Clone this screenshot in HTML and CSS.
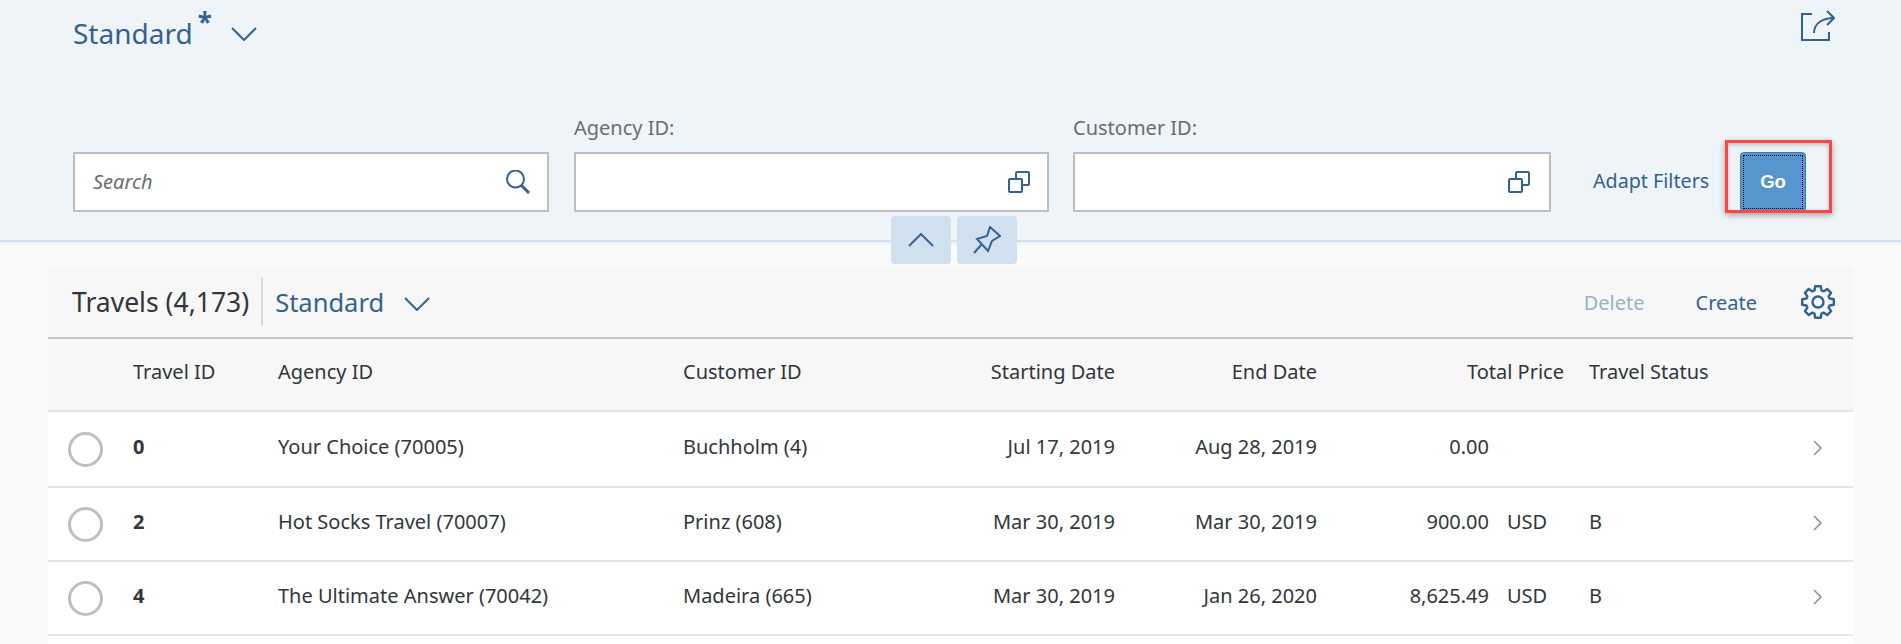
FILE: index.html
```html
<!DOCTYPE html>
<html lang="en">
<head>
    <meta charset="UTF-8">
    <title>Travels</title>
    <link rel="stylesheet" href="styles.css">
</head>
<body>
    <header class="filter-header">
        <div class="variant-row">
            <span class="variant-title">Standard</span>
            <span class="variant-star">*</span>
            <svg class="variant-chevron" width="26" height="14" viewBox="0 0 26 14"><path d="M1 1l12 12L25 1"/></svg>
            <svg class="share-icon" width="34" height="32" viewBox="0 0 34 32"><path d="M11 4H1V30H28V22M13 23C13 13 22 8 33 8M26 1l7 7-7 7"/></svg>
        </div>
        <div class="filter-bar">
            <div class="field field-search">
                <div class="input-box">
                    <span class="placeholder">Search</span>
                    <svg class="icon" width="25" height="24" viewBox="0 0 25 24"><circle cx="9.5" cy="9" r="8.5"/><path d="M15.5 15.5L23 23" class="thick"/></svg>
                </div>
            </div>
            <div class="field field-agency">
                <label>Agency ID:</label>
                <div class="input-box">
                    <svg class="icon" width="22" height="22" viewBox="0 0 22 22"><rect x="1" y="8" width="13" height="13" rx="1"/><path d="M8 8V2a1 1 0 0 1 1-1h11a1 1 0 0 1 1 1v11a1 1 0 0 1-1 1h-6"/></svg>
                </div>
            </div>
            <div class="field field-customer">
                <label>Customer ID:</label>
                <div class="input-box">
                    <svg class="icon" width="22" height="22" viewBox="0 0 22 22"><rect x="1" y="8" width="13" height="13" rx="1"/><path d="M8 8V2a1 1 0 0 1 1-1h11a1 1 0 0 1 1 1v11a1 1 0 0 1-1 1h-6"/></svg>
                </div>
            </div>
            <a class="adapt-link">Adapt Filters</a>
            <button class="go-btn"><span>Go</span></button>
        </div>
        <div class="collapse-btns">
            <div class="small-btn"><svg width="26" height="14" viewBox="0 0 26 14"><path d="M1 13L13 1l12 12"/></svg></div>
            <div class="small-btn"><svg width="28" height="28" viewBox="0 0 28 28"><path d="M17 1l10 9-8 5-4 10L4 13l10-3zM1 27l8-9"/></svg></div>
        </div>
        <div class="highlight"></div>
    </header>

    <section class="table-card">
        <div class="toolbar">
            <span class="table-title">Travels (4,173)</span>
            <span class="table-variant">Standard</span>
            <svg class="table-chevron" width="26" height="14" viewBox="0 0 26 14"><path d="M1 1l12 12L25 1"/></svg>
            <a class="tb-action disabled">Delete</a>
            <a class="tb-action">Create</a>
            <svg class="gear" width="34" height="34" viewBox="0 0 34 34"><path d="M13.5 5.5L14.2 1.2H19.8L20.5 5.5L22.6 6.4L26.2 3.9L30.1 7.8L27.6 11.4L28.5 13.5L32.8 14.2V19.8L28.5 20.5L27.6 22.6L30.1 26.2L26.2 30.1L22.6 27.6L20.5 28.5L19.8 32.8H14.2L13.5 28.5L11.4 27.6L7.8 30.1L3.9 26.2L6.4 22.6L5.5 20.5L1.2 19.8V14.2L5.5 13.5L6.4 11.4L3.9 7.8L7.8 3.9L11.4 6.4z"/><circle cx="17" cy="17" r="5.5"/></svg>
        </div>
        <div class="row head-row">
            <div></div>
            <div>Travel ID</div>
            <div>Agency ID</div>
            <div>Customer ID</div>
            <div class="right">Starting Date</div>
            <div class="right">End Date</div>
            <div class="right">Total Price</div>
            <div class="status">Travel Status</div>
            <div></div>
        </div>
        <div class="row first-row">
            <div><span class="radio"></span></div>
            <div class="id">0</div>
            <div>Your Choice (70005)</div>
            <div>Buchholm (4)</div>
            <div class="right">Jul 17, 2019</div>
            <div class="right">Aug 28, 2019</div>
            <div class="price"><span>0.00</span><span class="unit"></span></div>
            <div class="status"></div>
            <div><svg class="nav" width="9" height="16" viewBox="0 0 9 16"><path d="M1 1l7 7-7 7"/></svg></div>
        </div>
        <div class="row">
            <div><span class="radio"></span></div>
            <div class="id">2</div>
            <div>Hot Socks Travel (70007)</div>
            <div>Prinz (608)</div>
            <div class="right">Mar 30, 2019</div>
            <div class="right">Mar 30, 2019</div>
            <div class="price"><span>900.00</span><span class="unit">USD</span></div>
            <div class="status">B</div>
            <div><svg class="nav" width="9" height="16" viewBox="0 0 9 16"><path d="M1 1l7 7-7 7"/></svg></div>
        </div>
        <div class="row">
            <div><span class="radio"></span></div>
            <div class="id">4</div>
            <div>The Ultimate Answer (70042)</div>
            <div>Madeira (665)</div>
            <div class="right">Mar 30, 2019</div>
            <div class="right">Jan 26, 2020</div>
            <div class="price"><span>8,625.49</span><span class="unit">USD</span></div>
            <div class="status">B</div>
            <div><svg class="nav" width="9" height="16" viewBox="0 0 9 16"><path d="M1 1l7 7-7 7"/></svg></div>
        </div>
    </section>
</body>
</html>
```

FILE: styles.css
```css
html, body {
    height: 100%;
    overflow: hidden;
}

body {
    display: flex;
    flex-direction: column;
    margin: 0;
    background-color: #fafafa;
    font-family: "Noto Sans", Arial, sans-serif;
    font-size: 20px;
    color: #32363a;
}

svg {
    fill: none;
    stroke: #34628f;
    stroke-width: 2;
    display: block;
}

/* filter area */
.filter-header {
    position: relative;
    flex: none;
    height: 240px;
    background-color: #eff4f9;
    border-bottom: 2px solid #d1e0ef;
    box-shadow: 0 3px 0 #f0f4f9;
}

.variant-row {
    display: flex;
    align-items: flex-start;
    height: 152px;
    padding-left: 73px;
    padding-right: 66px;
    box-sizing: border-box;
}

.variant-title {
    margin-top: 13px;
    font-size: 28px;
    line-height: 40px;
    color: #34628f;
}

.variant-star {
    margin-top: 7px;
    margin-left: 5px;
    font-size: 26px;
    font-weight: bold;
    line-height: 30px;
    color: #34628f;
}

.variant-chevron {
    margin-top: 27px;
    margin-left: 19px;
}

.share-icon {
    margin-top: 10px;
    margin-left: auto;
}

.filter-bar {
    position: absolute;
    left: 73px;
    top: 116px;
    display: flex;
    align-items: flex-end;
}

.field {
    display: flex;
    flex-direction: column;
}

.field-search { width: 476px; margin-right: 25px; }
.field-agency { width: 475px; margin-right: 24px; }
.field-customer { width: 478px; margin-right: 42px; }

.field label {
    height: 36px;
    line-height: 24px;
    color: #6a6d70;
}

.input-box {
    display: flex;
    align-items: center;
    justify-content: flex-end;
    height: 60px;
    box-sizing: border-box;
    padding: 0 16px 0 18px;
    background: #fff;
    border: 2px solid #bfbfbf;
}

.field-agency .input-box {
    padding-right: 17px;
}

.field-customer .input-box {
    padding-right: 19px;
}

.placeholder {
    margin-right: auto;
    margin-bottom: 2px;
    font-style: italic;
    color: #6a6d70;
}

.icon .thick {
    stroke-width: 3;
}

.adapt-link {
    width: 147px;
    height: 60px;
    line-height: 58px;
    font-size: 19.7px;
    color: #34628f;
}

.go-btn {
    width: 66px;
    height: 60px;
    padding: 2px;
    background-color: #5496cd;
    border: 1px solid #427cac;
    border-radius: 4px;
    color: #fff;
    font-family: "Liberation Sans", Arial, sans-serif;
    font-size: 18.5px;
    font-weight: bold;
}

.go-btn span {
    display: flex;
    align-items: center;
    justify-content: center;
    height: 100%;
    border: 1px dotted #000;
    box-sizing: border-box;
}

.collapse-btns {
    position: absolute;
    left: 891px;
    top: 216px;
    display: flex;
    gap: 6px;
    z-index: 2;
}

.small-btn {
    display: flex;
    align-items: center;
    justify-content: center;
    width: 60px;
    height: 48px;
    background-color: #d1e0ef;
    border-radius: 4px;
}

.highlight {
    position: absolute;
    left: 1725px;
    top: 140px;
    width: 107px;
    height: 73px;
    box-sizing: border-box;
    border: 3px solid #ff4444;
    box-shadow: 0 2px 6px rgba(0, 0, 0, 0.35), inset 0 2px 4px rgba(0, 0, 0, 0.2);
}

/* table */
.table-card {
    flex: 1;
    margin: 25px 48px 0;
    background: #fff;
}

.toolbar {
    display: flex;
    align-items: center;
    height: 70px;
    padding: 0 18px 0 24px;
    background-color: #f7f7f7;
    border-bottom: 2px solid #c8c8c8;
}

.table-title {
    padding-right: 12px;
    border-right: 2px solid #d9d9d9;
    font-size: 26.5px;
    line-height: 48px;
}

.table-variant {
    margin-left: 12px;
    font-size: 25.5px;
    color: #34628f;
}

.table-chevron {
    margin-left: 20px;
    margin-top: 4px;
}

.tb-action {
    color: #34628f;
    margin-left: 51px;
}

.tb-action.disabled {
    margin-left: auto;
    color: #9ab1c7;
}

.gear {
    margin-left: 44px;
    stroke-width: 2.4;
    stroke-linejoin: round;
}

.row {
    display: grid;
    grid-template-columns: 85px 145px 405px 200px 232px 202px 247px 249px 40px;
    align-items: center;
    box-sizing: border-box;
    height: 74px;
    padding-bottom: 6px;
    border-bottom: 2px solid #e5e5e5;
    white-space: nowrap;
}

.head-row {
    height: 73px;
    background-color: #f7f7f7;
}

.first-row {
    height: 76px;
}

.right {
    text-align: right;
}

.id {
    font-weight: bold;
}

.radio {
    display: block;
    width: 35px;
    height: 35px;
    margin-left: 20px;
    margin-top: 6px;
    box-sizing: border-box;
    border: 3px solid #bfbfbf;
    border-radius: 50%;
}

.price {
    display: flex;
    justify-content: flex-end;
    gap: 18px;
}

.unit {
    width: 57px;
}

.status {
    padding-left: 25px;
}

.nav {
    stroke: #8c8c8c;
    stroke-width: 1.5;
    margin-top: 4px;
}
```
